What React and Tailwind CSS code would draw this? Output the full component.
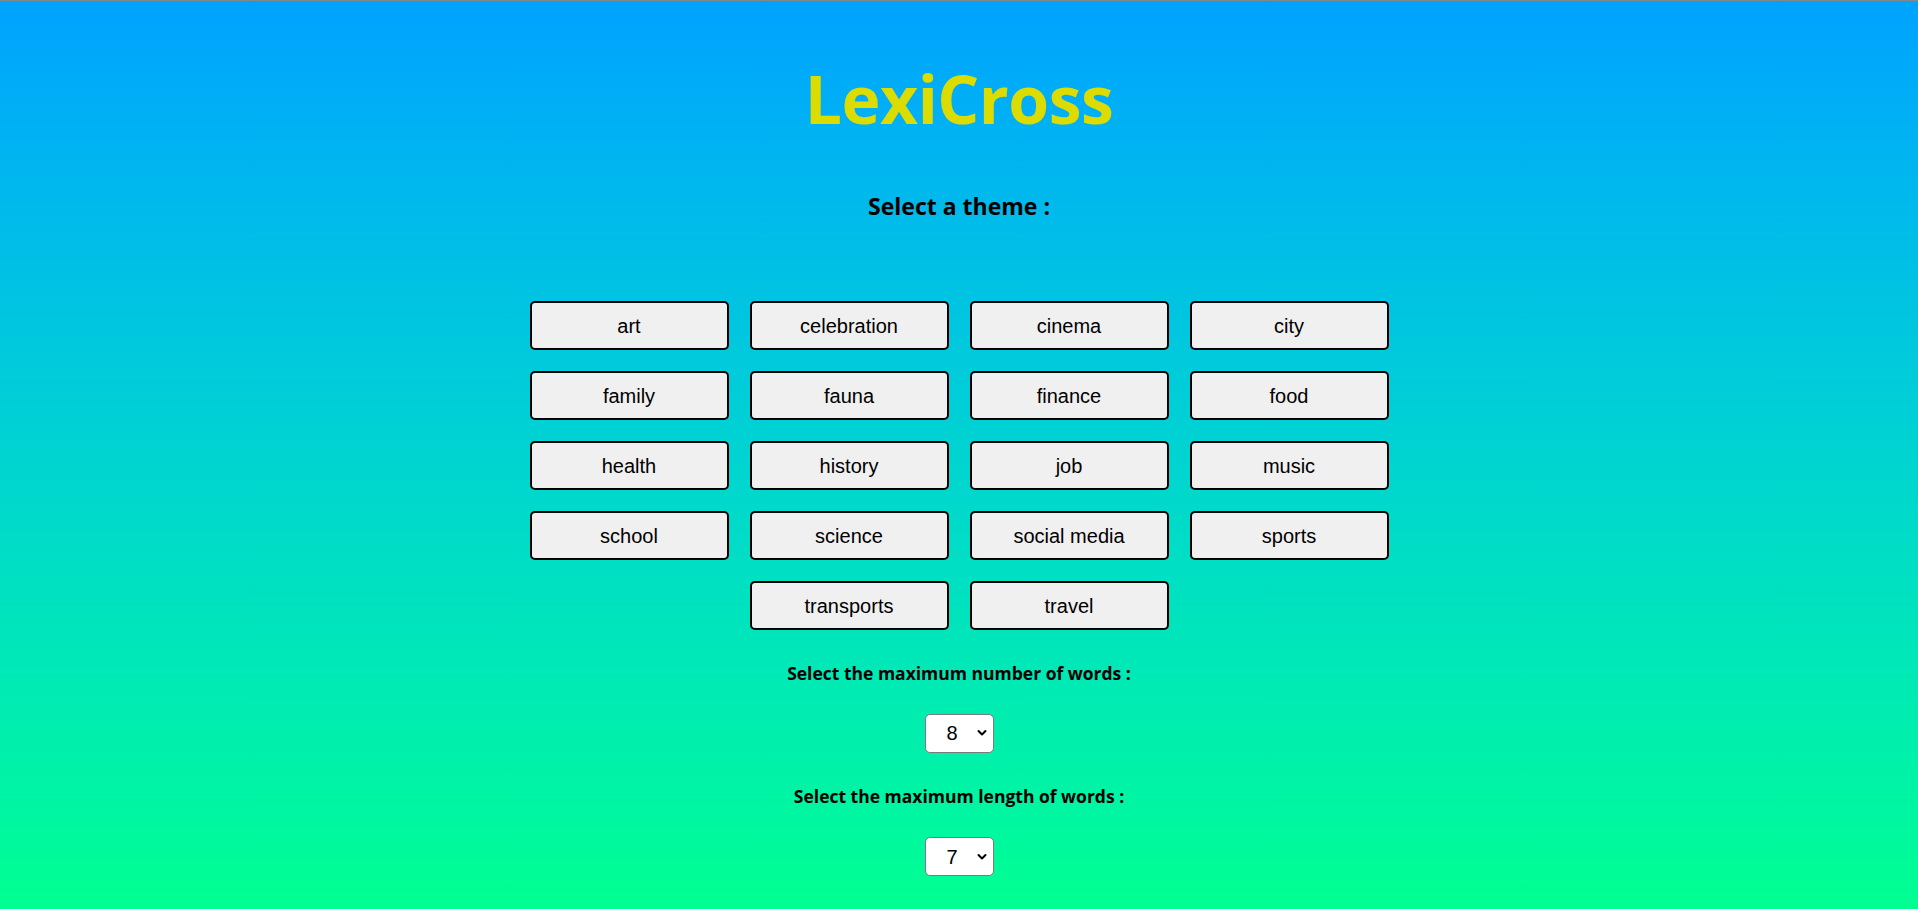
import React from 'react';

const themes = [
  'art', 'celebration', 'cinema', 'city',
  'family', 'fauna', 'finance', 'food',
  'health', 'history', 'job', 'music',
  'school', 'science', 'social media', 'sports',
  'transports', 'travel',
];

function Chevron() {
  return (
    <svg width="10" height="7" viewBox="0 0 10 7" className="absolute right-[7px] top-1/2 -translate-y-1/2">
      <path d="M1.5 1.5 L5 5 L8.5 1.5" fill="none" stroke="#000" strokeWidth="2" strokeLinecap="round" strokeLinejoin="round" />
    </svg>
  );
}

function NumberSelect({ value, options }) {
  return (
    <div className="relative w-[69px] h-[39px]">
      <select
        defaultValue={value}
        className="appearance-none w-full h-full bg-white border-[1.5px] border-[#7b7b7b] rounded-[5px] pl-[21px] text-[20px] text-black font-['Liberation_Sans',Arial,sans-serif] outline-none"
      >
        {options.map((o) => (
          <option key={o} value={o}>{o}</option>
        ))}
      </select>
      <Chevron />
    </div>
  );
}

export default function App() {
  const range = [3, 4, 5, 6, 7, 8, 9, 10, 11, 12];
  return (
    <div className="min-h-screen border-t border-[#7f8a8f] bg-gradient-to-b from-[#00a2ff] to-[#00ff91] flex flex-col items-center font-['Open_Sans',sans-serif]">
      <h1 className="mt-[64px] text-[66px] leading-none font-bold tracking-[-0.5px] text-[#dcdc00]">LexiCross</h1>

      <h3 className="mt-[64px] text-[23px] leading-none font-bold text-black">Select a theme :</h3>

      <div className="mt-[83px] w-[880px] flex flex-wrap justify-center gap-[21px]">
        {themes.map((t) => (
          <button
            key={t}
            className="w-[199px] h-[49px] bg-[#f0f0f0] border-2 border-black rounded-[5px] text-[20px] text-black font-['Liberation_Sans',Arial,sans-serif]"
          >
            {t}
          </button>
        ))}
      </div>

      <h4 className="mt-[35px] text-[17.5px] leading-none font-bold text-black">Select the maximum number of words :</h4>
      <div className="mt-[31px]">
        <NumberSelect value={8} options={range} />
      </div>

      <h4 className="mt-[35px] text-[17.5px] leading-none font-bold text-black">Select the maximum length of words :</h4>
      <div className="mt-[32px]">
        <NumberSelect value={7} options={range} />
      </div>
    </div>
  );
}
